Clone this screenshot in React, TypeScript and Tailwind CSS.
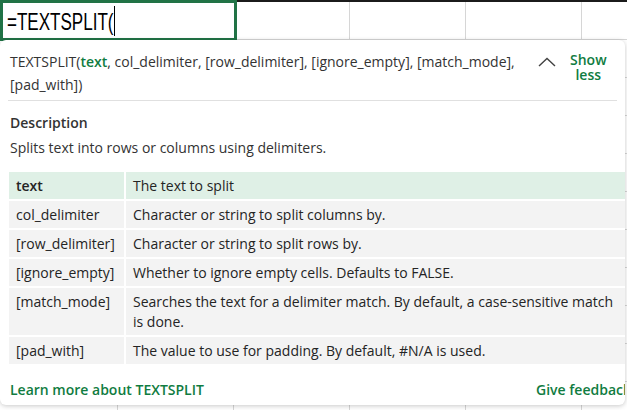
import React from "react";

const colWidths = [118, 116, 116, 116, 116, 116];
const rowCount = 11;

const args = [
  { name: "text", desc: "The text to split", active: true },
  { name: "col_delimiter", desc: "Character or string to split columns by." },
  { name: "[row_delimiter]", desc: "Character or string to split rows by." },
  { name: "[ignore_empty]", desc: "Whether to ignore empty cells. Defaults to FALSE." },
  {
    name: "[match_mode]",
    desc: "Searches the text for a delimiter match. By default, a case-sensitive match is done.",
  },
  { name: "[pad_with]", desc: "The value to use for padding. By default, #N/A is used." },
];

function Sheet() {
  return (
    <div className="flex flex-col">
      <div className="h-[2px] w-full bg-[#1b1b1b]" />
      <div className="flex h-[38px]">
        {colWidths.map((w, i) => (
          <div key={i} className="shrink-0 border-r border-b border-[#d6d6d6]" style={{ width: w }} />
        ))}
      </div>
      {Array.from({ length: rowCount }).map((_, r) => (
        <div key={r} className="flex h-[38px]">
          {colWidths.map((w, i) => (
            <div key={i} className="shrink-0 border-r border-b border-[#d6d6d6]" style={{ width: w }} />
          ))}
        </div>
      ))}
    </div>
  );
}

export default function App() {
  return (
    <div
      className="relative h-[410px] w-[627px] overflow-hidden bg-white text-[#242424]"
      style={{ fontFamily: '"Open Sans", "Noto Sans", sans-serif' }}
    >
      <Sheet />

      {/* cell being edited */}
      <div className="absolute left-0 top-0 flex h-[41px] w-[237px] items-end border-[3px] border-[#217346] bg-white pb-[1px] pl-[4px]">
        <span className="inline-block w-[106px] overflow-visible whitespace-nowrap">
          <span
            className="inline-block origin-left scale-x-[0.71] text-[24px] leading-[30px] text-black"
            style={{ fontFamily: '"Liberation Sans", sans-serif' }}
          >
            =TEXTSPLIT(
          </span>
        </span>
        <span className="mb-[1px] ml-[1px] h-[30px] w-px bg-black" />
      </div>

      {/* function tooltip */}
      <div className="absolute left-0 top-[40px] flex h-[365px] w-[625px] flex-col overflow-hidden rounded-[6px] bg-white shadow-[0_1px_5px_rgba(0,0,0,0.22)]">
        <div className="flex items-start pl-[10px] pt-[10px]">
          <p className="w-[520px] text-[14px] leading-[23px] text-[#333]">
            TEXTSPLIT(<span className="font-semibold text-[#107c41]">text</span>, col_delimiter,
            [row_delimiter], [ignore_empty], [match_mode], [pad_with])
          </p>
          <svg width="18" height="10" viewBox="0 0 18 10" className="ml-[8px] mt-[7px] shrink-0">
            <polyline points="1,9 9,1.5 17,9" fill="none" stroke="#424242" strokeWidth="1.4" />
          </svg>
          <button className="ml-[14px] mt-[2px] text-center text-[14px] font-semibold leading-[15px] text-[#107c41]">
            Show
            <br />
            less
          </button>
        </div>

        <div className="mx-[8px] mt-[4px] h-px w-[609px] bg-[#e0e0e0]" />

        <div className="pl-[10px] pt-[12px] text-[14px] leading-[20px]">
          <p className="font-semibold text-[#333]">Description</p>
          <p className="mt-[5px] text-[#333]">Splits text into rows or columns using delimiters.</p>
        </div>

        <div className="ml-[9px] mt-[14px] flex flex-col gap-[2px] text-[14px] leading-[20px]">
          {args.map((a) => (
            <div key={a.name} className={`flex ${a.active ? "bg-[#dff0e6]" : "bg-[#f3f3f3]"}`}>
              <div className={`w-[115px] shrink-0 px-[7px] py-[3.5px] ${a.active ? "font-semibold" : ""}`}>
                {a.name}
              </div>
              <div className="w-[2px] shrink-0 bg-white" />
              <div className="flex-1 py-[3.5px] pl-[7px] pr-[4px]">{a.desc}</div>
            </div>
          ))}
        </div>

        <div className="-mr-[10px] mt-[16px] flex justify-between pl-[10px] text-[14px] font-semibold leading-[20px] text-[#107c41]">
          <span>Learn more about TEXTSPLIT</span>
          <span className="pr-[4px]">Give feedback</span>
        </div>
      </div>
    </div>
  );
}
